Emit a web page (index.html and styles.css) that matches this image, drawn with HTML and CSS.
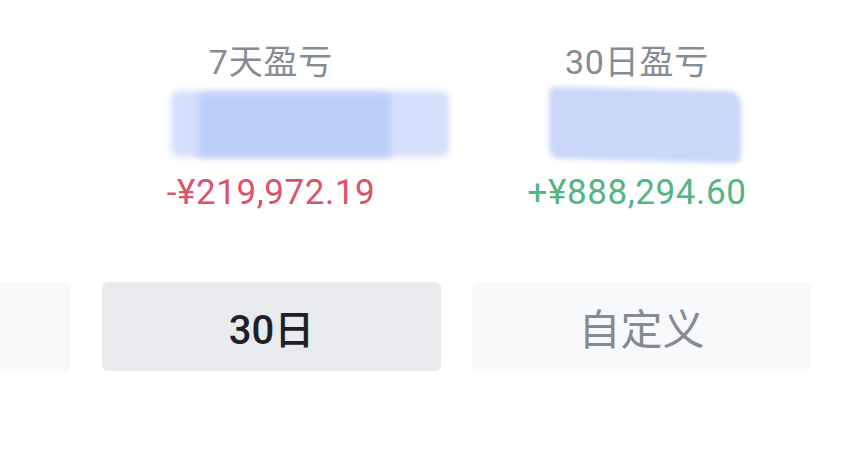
FILE: index.html
```html
<!DOCTYPE html>
<html lang="zh">
<head>
<meta charset="utf-8">
<link rel="stylesheet" href="styles.css">
</head>
<body>
<div class="page">
  <div class="stats">
    <div class="stat"></div>
    <div class="stat">
      <div class="label">7天盈亏</div>
      <div class="mask mask-a">
        <div class="m-outer"></div>
        <div class="m-inner"></div>
      </div>
      <div class="value neg">-¥219,972.19</div>
    </div>
    <div class="stat">
      <div class="label">30日盈亏</div>
      <div class="mask mask-b">
        <div class="m-single"></div>
      </div>
      <div class="value pos">+¥888,294.60</div>
    </div>
  </div>
  <div class="tabs">
    <div class="tab"></div>
    <div class="tab active">30日</div>
    <div class="tab">自定义</div>
  </div>
</div>
</body>
</html>
```

FILE: styles.css
```css
* { box-sizing: border-box; }
html, body {
  margin: 0;
  padding: 0;
  background: #ffffff;
  overflow: hidden;
}
body {
  width: 857px;
  height: 459px;
  font-family: Roboto, "Noto Sans CJK SC", sans-serif;
}
.page {
  margin-left: -268px;
  width: 1100px;
}
.stats {
  display: grid;
  grid-template-columns: 366px 366px 366px;
  margin-left: -10px;
  padding-top: 39px;
}
.stat {
  display: flex;
  flex-direction: column;
  align-items: center;
}
.label {
  font-size: 34px;
  line-height: 46px;
  color: #868b94;
  letter-spacing: 0.8px;
}
.mask {
  position: relative;
  height: 76px;
  margin-top: 2px;
}
.mask-a { width: 280px; margin-left: 80px; }
.mask-b { width: 196px; margin-left: 16px; }
.m-outer {
  position: absolute;
  left: 0; top: 4px; right: 2px; bottom: 6px;
  background: #d6e0fb;
  border-radius: 8px;
  filter: blur(3px);
}
.m-inner {
  position: absolute;
  left: 26px; top: 6px; width: 194px; bottom: 5px;
  background: #bdcff8;
  border-radius: 6px;
  filter: blur(3px);
}
.m-single {
  position: absolute;
  left: 2px; top: 2px; right: 2px; bottom: 2px;
  background: #c9d7f9;
  border-radius: 6px 12px 8px 10px;
  transform: skewY(1.5deg);
  filter: blur(2.5px);
}
.value {
  font-size: 35px;
  line-height: 40px;
  margin-top: 10px;
  letter-spacing: 0.6px;
}
.neg { color: #d9546a; }
.pos { color: #52b584; }
.tabs {
  display: grid;
  grid-template-columns: 339px 339px 339px;
  column-gap: 31px;
  margin-top: 69px;
}
.tab {
  height: 89px;
  border-radius: 6px;
  background: #f8f9fa;
  color: #858a93;
  font-size: 42px;
  display: flex;
  align-items: center;
  justify-content: center;
}
.tab.active {
  background: #e9eaee;
  color: #1d2027;
  font-weight: 500;
  font-size: 40px;
}
```
